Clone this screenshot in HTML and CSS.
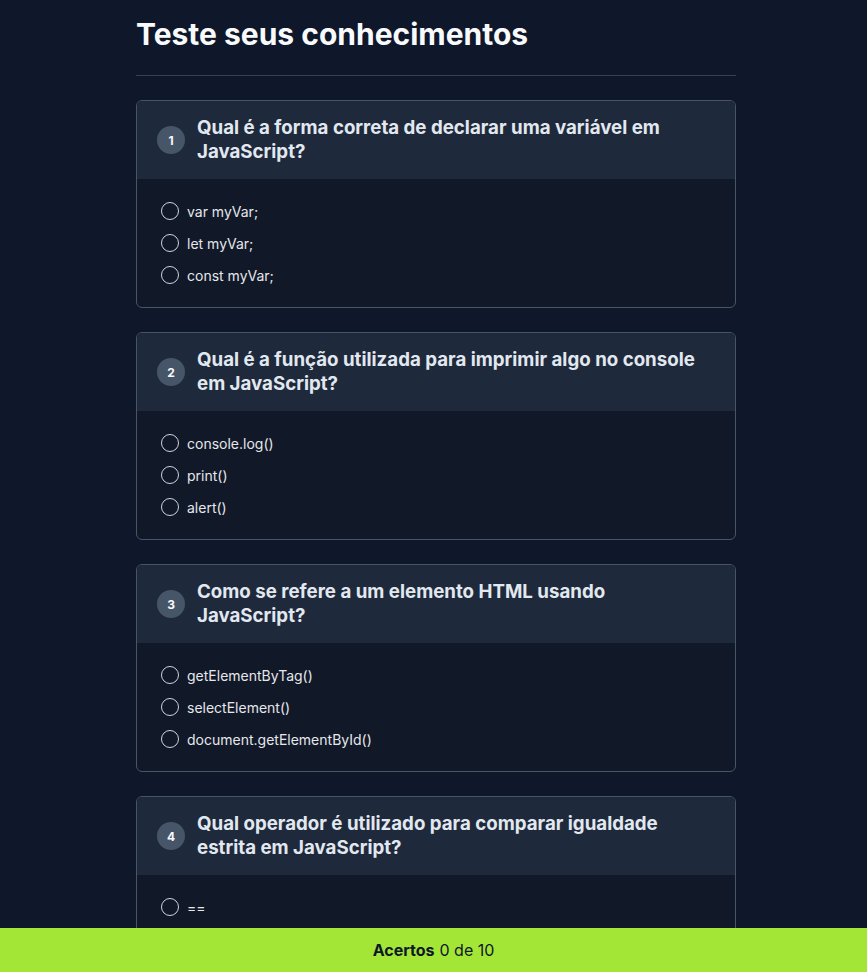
FILE: index.html
```html
<!DOCTYPE html>
<html lang="pt-BR">
<head>
<meta charset="utf-8">
<title>Quiz</title>
<link rel="stylesheet" href="styles.css">
</head>
<body>
<main class="container">
  <h1 class="title">Teste seus conhecimentos</h1>
  <hr class="divider">

  <section class="card">
    <div class="card-head"><span class="badge">1</span><h2 class="question">Qual é a forma correta de declarar uma variável em JavaScript?</h2></div>
    <div class="card-body">
      <label class="option"><span class="radio"></span>var myVar;</label>
      <label class="option"><span class="radio"></span>let myVar;</label>
      <label class="option"><span class="radio"></span>const myVar;</label>
    </div>
  </section>

  <section class="card">
    <div class="card-head"><span class="badge">2</span><h2 class="question">Qual é a função utilizada para imprimir algo no console em JavaScript?</h2></div>
    <div class="card-body">
      <label class="option"><span class="radio"></span>console.log()</label>
      <label class="option"><span class="radio"></span>print()</label>
      <label class="option"><span class="radio"></span>alert()</label>
    </div>
  </section>

  <section class="card">
    <div class="card-head"><span class="badge">3</span><h2 class="question">Como se refere a um elemento HTML usando JavaScript?</h2></div>
    <div class="card-body">
      <label class="option"><span class="radio"></span>getElementByTag()</label>
      <label class="option"><span class="radio"></span>selectElement()</label>
      <label class="option"><span class="radio"></span>document.getElementById()</label>
    </div>
  </section>

  <section class="card">
    <div class="card-head"><span class="badge">4</span><h2 class="question">Qual operador é utilizado para comparar igualdade estrita em JavaScript?</h2></div>
    <div class="card-body">
      <label class="option"><span class="radio"></span>==</label>
    </div>
  </section>
</main>
<footer class="score"><strong>Acertos</strong> 0 de 10</footer>
</body>
</html>
```
FILE: styles.css
```css
* { box-sizing: border-box; }
html, body { margin: 0; padding: 0; }
body {
  background: #0f172a;
  color: #f1f5f9;
  font-family: Inter, "Noto Sans", sans-serif;
}
.container {
  width: 600px;
  margin-left: calc(50% - 297.5px);
  padding: 16px 0 60px;
}
.title {
  margin: 0;
  font-size: 30px;
  line-height: 36px;
  font-weight: 700;
  color: #f8fafc;
}
.divider {
  border: 0;
  border-top: 1px solid #334155;
  margin: 23px 0 24px;
}
.card {
  border: 1px solid #475569;
  border-radius: 6px;
  overflow: hidden;
  margin-bottom: 24px;
  background: #111827;
}
.card-head {
  background: #1e293b;
  display: flex;
  align-items: center;
  gap: 12px;
  padding: 15px 20px;
}
.badge {
  flex: none;
  width: 28px;
  height: 28px;
  border-radius: 50%;
  background: #475569;
  color: #f8fafc;
  font-size: 12px;
  font-weight: 700;
  display: flex;
  align-items: center;
  justify-content: center;
}
.question {
  margin: 0;
  font-size: 18.7px;
  line-height: 24px;
  font-weight: 700;
  color: #e2e8f0;
}
.card-body {
  padding: 16px 24px;
}
.option {
  display: flex;
  align-items: center;
  gap: 8px;
  height: 32px;
  font-size: 14px;
  color: #e5e7eb;
}
.radio {
  width: 18px;
  height: 18px;
  border-radius: 50%;
  border: 1.5px solid #cbd5e1;
  flex: none;
}
.score {
  position: fixed;
  left: 0;
  right: 0;
  bottom: 0;
  height: 44px;
  background: #a3e635;
  color: #0f172a;
  display: flex;
  align-items: center;
  justify-content: center;
  gap: 5px;
  font-size: 16px;
}
.score strong { font-weight: 700; }
```
